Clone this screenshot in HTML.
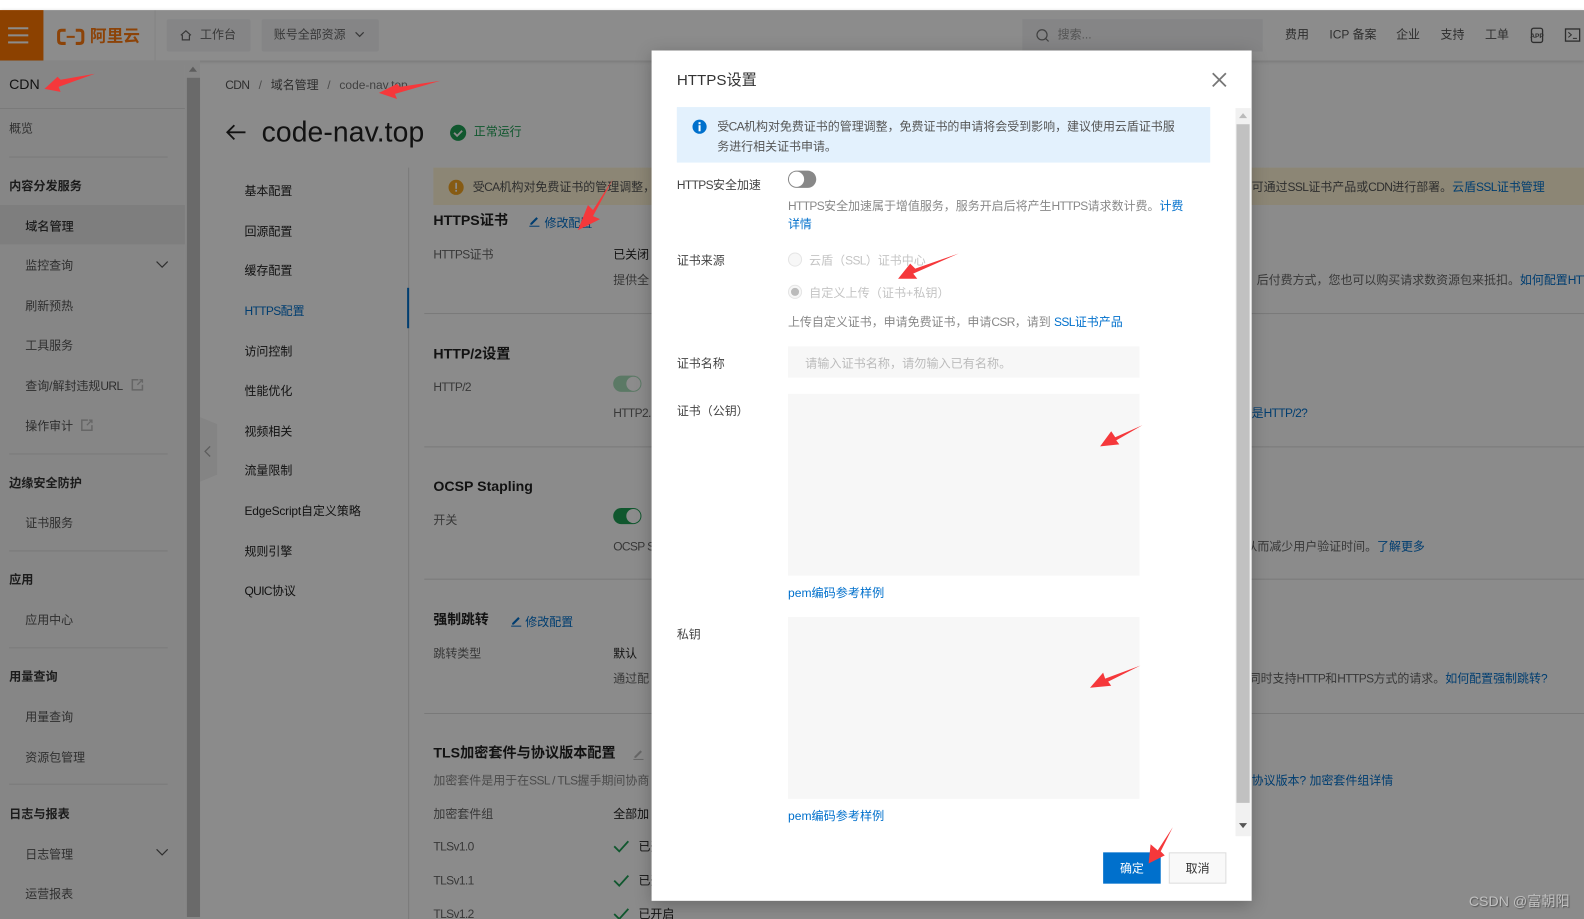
<!DOCTYPE html>
<html lang="zh"><head><meta charset="utf-8"><title>HTTPS设置</title>
<style>
html,body{margin:0;padding:0;width:1584px;height:919px;overflow:hidden;background:#fff}
#w{position:absolute;left:0;top:0;width:1568px;height:910px;overflow:hidden;transform:scale(1.0102,1.0099);transform-origin:0 0;font:11.85px/18px "Liberation Sans","Noto Sans CJK SC",sans-serif;color:#333;background:#fff}
.t{position:absolute;white-space:nowrap;line-height:18px;margin-top:.5px}
.b{position:absolute}
.g{color:#666}.l{color:#555}.k{color:#222}.a{color:#0070cc}
.n{letter-spacing:-.6px}
.h{font-weight:700;font-size:14px;color:#222}
.s{font-weight:700;font-size:12px;color:#333}
.d{position:absolute;height:1px;background:#ddd}
.m0{margin-top:0}
svg{position:absolute;overflow:visible}
</style></head><body><div id="w">
<!-- page -->
<div class="b" style="left:0;top:10px;width:1568px;height:900px;background:#fdfdfd"></div>
<div class="b" style="left:0;top:10px;width:1568px;height:50px;background:#fff;box-shadow:0 1px 4px rgba(0,0,0,.2)"></div>
<div class="b" style="left:0;top:10px;width:43px;height:50px;background:#ff7700"></div>
<div class="b" style="left:8px;top:27px;width:20px;height:2px;background:#fff"></div>
<div class="b" style="left:8px;top:34px;width:20px;height:2px;background:#fff"></div>
<div class="b" style="left:8px;top:41px;width:20px;height:2px;background:#fff"></div>
<svg style="left:0;top:0" width="200" height="60"><g fill="none" stroke="#ff7a10" stroke-width="3"><path d="M65 30h-4q-3 0-3 3v7q0 3 3 3h4"/><path d="M75 30h4q3 0 3 3v7q0 3-3 3h-4"/><path d="M66 36.500h8" stroke-width="2"/></g></svg>
<div class="t m0" style="left:89px;top:26px;font-size:16.500px;line-height:20px;font-weight:700;color:#ff7a10">阿里云</div>
<div class="b" style="left:153px;top:10px;width:1px;height:50px;background:#eee"></div>
<div class="b" style="left:165px;top:19px;width:83px;height:32px;background:#f2f3f5;border-radius:2px"></div>
<svg style="left:178px;top:29px" width="12" height="12" viewBox="0 0 12 12"><path d="M1 6l5-4.500 5 4.500M2.500 5.500v5h7v-5" fill="none" stroke="#666" stroke-width="1.200"/></svg>
<div class="t g m0" style="left:198px;top:25px">工作台</div>
<div class="b" style="left:259px;top:19px;width:116px;height:32px;background:#f2f3f5;border-radius:2px"></div>
<div class="t g m0" style="left:271px;top:25px">账号全部资源</div>
<svg style="left:351px;top:31px" width="10" height="8"><path d="M1 1l4 4 4-4" fill="none" stroke="#666" stroke-width="1.200"/></svg>
<div class="b" style="left:1012px;top:19px;width:238px;height:32px;background:#f2f3f5"></div>
<svg style="left:1025px;top:28px" width="14" height="14"><circle cx="6.500" cy="6.500" r="5" fill="none" stroke="#777" stroke-width="1.200"/><path d="M10 10l3 3" stroke="#777" stroke-width="1.200"/></svg>
<div class="t m0" style="left:1047px;top:25px;color:#999">搜索...</div>
<div class="t l m0" style="left:1272px;top:25px">费用</div>
<div class="t l m0" style="left:1316px;top:25px">ICP 备案</div>
<div class="t l m0" style="left:1382px;top:25px">企业</div>
<div class="t l m0" style="left:1426px;top:25px">支持</div>
<div class="t l m0" style="left:1470px;top:25px">工单</div>
<svg style="left:1514px;top:27px" width="16" height="16"><rect x="2" y="1" width="11" height="14" rx="2" fill="none" stroke="#555" stroke-width="1.300"/><text x="7.500" y="10.500" font-size="6.500" font-weight="700" text-anchor="middle" fill="#555" font-family="Liberation Sans">APP</text></svg>
<svg style="left:1549px;top:28px" width="16" height="14"><rect x=".700" y=".700" width="14" height="12" fill="none" stroke="#555" stroke-width="1.300"/><path d="M3.500 4l3 2.500-3 2.500M8 10h4" fill="none" stroke="#555"/></svg>

<!-- sidebar -->
<div class="b" style="left:0;top:60px;width:183px;height:850px;background:#f5f5f5"></div>
<div class="b" style="left:183px;top:60px;width:15px;height:850px;background:#f5f5f5"></div>
<div class="b" style="left:185px;top:77px;width:13px;height:831px;background:#c1c1c1"></div>
<svg style="left:186px;top:66px" width="10" height="6"><path d="M5 0l4 5H1z" fill="#aaa"/></svg>
<div class="t m0" style="left:9px;top:74px;font-size:14px;color:#222">CDN</div>
<div class="d" style="left:0;top:107px;width:183px"></div>
<div class="t l m0" style="left:9px;top:118px">概览</div>
<div class="d" style="left:9px;top:155px;width:157px"></div>
<div class="t s" style="left:9px;top:174px">内容分发服务</div>
<div class="b" style="left:0;top:203px;width:183px;height:39px;background:#e6e6e6"></div>
<div class="t s" style="left:25px;top:214px;font-weight:500">域名管理</div>
<div class="t l" style="left:25px;top:253px">监控查询</div>
<svg style="left:154px;top:258px" width="13" height="9"><path d="M1 1l5.500 5.500L12 1" fill="none" stroke="#555" stroke-width="1.200"/></svg>
<div class="t l" style="left:25px;top:293px">刷新预热</div>
<div class="t l" style="left:25px;top:332px">工具服务</div>
<div class="t l" style="left:25px;top:372px">查询/解封违规<span class="n">URL</span></div>
<svg style="left:130px;top:375px" width="12" height="12"><path d="M7 1H1v10h10V6" fill="none" stroke="#bbb" stroke-width="1.500"/><path d="M6 6l5-5M8 1h3v3" fill="none" stroke="#bbb" stroke-width="1.300"/></svg>
<div class="t l" style="left:25px;top:412px">操作审计</div>
<svg style="left:80px;top:415px" width="12" height="12"><path d="M7 1H1v10h10V6" fill="none" stroke="#bbb" stroke-width="1.500"/><path d="M6 6l5-5M8 1h3v3" fill="none" stroke="#bbb" stroke-width="1.300"/></svg>
<div class="d" style="left:9px;top:449px;width:157px"></div>
<div class="t s" style="left:9px;top:468px">边缘安全防护</div>
<div class="t l" style="left:25px;top:508px">证书服务</div>
<div class="d" style="left:9px;top:545px;width:157px"></div>
<div class="t s" style="left:9px;top:564px">应用</div>
<div class="t l" style="left:25px;top:604px">应用中心</div>
<div class="d" style="left:9px;top:641px;width:157px"></div>
<div class="t s" style="left:9px;top:660px">用量查询</div>
<div class="t l" style="left:25px;top:700px">用量查询</div>
<div class="t l" style="left:25px;top:740px">资源包管理</div>
<div class="d" style="left:9px;top:776px;width:157px"></div>
<div class="t s" style="left:9px;top:796px">日志与报表</div>
<div class="t l" style="left:25px;top:836px">日志管理</div>
<svg style="left:154px;top:840px" width="13" height="9"><path d="M1 1l5.500 5.500L12 1" fill="none" stroke="#555" stroke-width="1.200"/></svg>
<div class="t l" style="left:25px;top:875px">运营报表</div>
<svg style="left:198px;top:413px" width="18" height="65"><path d="M0 0l17 7v50L0 64z" fill="#f0f0f0"/><path d="M10 27l-5 5 5 5" fill="none" stroke="#aaa" stroke-width="1.300" transform="translate(0,2)"/></svg>

<!-- head -->
<div class="t l m0" style="left:223px;top:75px"><span class="n">CDN</span></div>
<div class="t m0" style="left:256px;top:75px;color:#888">/</div>
<div class="t l m0" style="left:268px;top:75px">域名管理</div>
<div class="t m0" style="left:324px;top:75px;color:#888">/</div>
<div class="t m0" style="left:336px;top:75px;color:#777">code-nav.top</div>
<svg style="left:223px;top:122px" width="21" height="18"><path d="M20 9H2M9 2L2 9l7 7" fill="none" stroke="#222" stroke-width="1.800"/></svg>
<div class="t m0" style="left:259px;top:114px;font-size:28px;line-height:34px;letter-spacing:.1px;color:#222">code-nav.top</div>
<svg style="left:445px;top:123px" width="17" height="17"><circle cx="8.500" cy="8.500" r="8" fill="#1e9e55"/><path d="M4.500 8.500l3 3 5-5" fill="none" stroke="#fff" stroke-width="1.800"/></svg>
<div class="t m0" style="left:469px;top:121px;color:#1e9e55">正常运行</div>

<!-- sub menu -->
<div class="t k" style="left:242px;top:179px">基本配置</div>
<div class="t k" style="left:242px;top:219px">回源配置</div>
<div class="t k" style="left:242px;top:258px">缓存配置</div>
<div class="t a" style="left:242px;top:298px"><span class="n">HTTPS</span>配置</div>
<div class="t k" style="left:242px;top:338px">访问控制</div>
<div class="t k" style="left:242px;top:377px">性能优化</div>
<div class="t k" style="left:242px;top:417px">视频相关</div>
<div class="t k" style="left:242px;top:456px">流量限制</div>
<div class="t k" style="left:242px;top:496px"><span style="letter-spacing:-.2px">EdgeScript</span>自定义策略</div>
<div class="t k" style="left:242px;top:536px">规则引擎</div>
<div class="t k" style="left:242px;top:575px"><span class="n">QUIC</span>协议</div>
<div class="b" style="left:404px;top:166px;width:1px;height:744px;background:#ddd"></div>
<div class="b" style="left:403px;top:285px;width:2px;height:40px;background:#0070cc"></div>

<!-- main -->
<div class="b" style="left:429px;top:166px;width:1139px;height:37px;background:#fff5d6"></div>
<svg style="left:444px;top:178px" width="15" height="15"><circle cx="7.500" cy="7.500" r="7.500" fill="#f5a623"/><rect x="6.700" y="3" width="1.700" height="6" fill="#fff"/><rect x="6.700" y="10" width="1.700" height="1.800" fill="#fff"/></svg>
<div class="t l" style="left:468px;top:175px"><span class="n">受CA</span>机构对免费证书的管理调整，</div>
<div class="t l" style="left:1239px;top:175px">可通过<span class="n">SSL</span>证书产品或<span class="n">CDN</span>进行部署。<span class="a">云盾<span class="n">SSL</span>证书管理</span></div>

<div class="t h" style="left:429px;top:208px">HTTPS证书</div>
<svg class="pen" style="left:523px;top:213px" width="12" height="12"><path d="M1 11h10M2 8l6-6 1.500 1.500-6 6H2z" fill="#0070cc"/><path d="M1 11h10" stroke="#0070cc"/></svg>
<div class="t a" style="left:539px;top:211px">修改配置</div>
<div class="t g" style="left:429px;top:242px"><span class="n">HTTPS</span>证书</div>
<div class="t k" style="left:607px;top:242px">已关闭</div>
<div class="t g" style="left:607px;top:267px">提供全</div>
<div class="t g" style="left:1244px;top:267px">后付费方式，您也可以购买请求数资源包来抵扣。<span class="a">如何配置<span class="n">HTTPS</span></span></div>
<div class="d" style="left:420px;top:310px;width:1148px"></div>

<div class="t h" style="left:429px;top:340px">HTTP/2设置</div>
<div class="t g" style="left:429px;top:373px"><span class="n">HTTP/2</span></div>
<div class="b" style="left:607px;top:372px;width:28px;height:16px;border-radius:8px;background:#a6dcb8"></div>
<div class="b" style="left:620px;top:373px;width:14px;height:14px;border-radius:50%;background:#fff"></div>
<div class="t g" style="left:607px;top:399px"><span class="n">HTTP2.</span></div>
<div class="t a" style="left:1239px;top:399px">是<span class="n">HTTP/2?</span></div>
<div class="d" style="left:420px;top:442px;width:1148px"></div>

<div class="t h" style="left:429px;top:471px">OCSP Stapling</div>
<div class="t g" style="left:429px;top:505px">开关</div>
<div class="b" style="left:607px;top:503px;width:28px;height:16px;border-radius:8px;background:#1e9e55"></div>
<div class="b" style="left:620px;top:504px;width:14px;height:14px;border-radius:50%;background:#fff"></div>
<div class="t g" style="left:607px;top:531px"><span class="n">OCSP S</span></div>
<div class="t g" style="left:1221px;top:531px">，从而减少用户验证时间。<span class="a">了解更多</span></div>
<div class="d" style="left:420px;top:573px;width:1148px"></div>

<div class="t h" style="left:429px;top:604px;font-size:13.700px">强制跳转</div>
<svg style="left:505px;top:609px" width="12" height="12"><path d="M2 8l6-6 1.500 1.500-6 6H2z" fill="#0070cc"/><path d="M1 11h10" stroke="#0070cc"/></svg>
<div class="t a" style="left:520px;top:606px">修改配置</div>
<div class="t g" style="left:429px;top:637px">跳转类型</div>
<div class="t k" style="left:607px;top:637px">默认</div>
<div class="t g" style="left:607px;top:662px">通过配</div>
<div class="t g" style="left:1236px;top:662px">同时支持<span class="n">HTTP</span>和<span class="n">HTTPS</span>方式的请求。<span class="a">如何配置强制跳转?</span></div>
<div class="d" style="left:420px;top:706px;width:1148px"></div>

<div class="t h" style="left:429px;top:735px">TLS加密套件与协议版本配置</div>
<svg style="left:626px;top:741px" width="12" height="12"><path d="M2 8l6-6 1.500 1.500-6 6H2z" fill="#bbb"/><path d="M1 11h10" stroke="#bbb"/></svg>
<div class="t" style="left:429px;top:763px;color:#888">加密套件是用于在<span class="n">SSL / TLS</span>握手期间协商</div>
<div class="t a" style="left:1239px;top:763px">协议版本? 加密套件组详情</div>
<div class="t g" style="left:429px;top:796px">加密套件组</div>
<div class="t k" style="left:607px;top:796px">全部加</div>
<div class="t g" style="left:429px;top:828px"><span class="n">TLSv1.0</span></div>
<div class="t g" style="left:429px;top:862px"><span class="n">TLSv1.1</span></div>
<div class="t g" style="left:429px;top:895px"><span class="n">TLSv1.2</span></div>
<svg style="left:607px;top:831px" width="16" height="14"><path d="M1 7l5 5 9-10" fill="none" stroke="#1e9e55" stroke-width="1.800"/></svg>
<svg style="left:607px;top:865px" width="16" height="14"><path d="M1 7l5 5 9-10" fill="none" stroke="#1e9e55" stroke-width="1.800"/></svg>
<svg style="left:607px;top:898px" width="16" height="14"><path d="M1 7l5 5 9-10" fill="none" stroke="#1e9e55" stroke-width="1.800"/></svg>
<div class="t k" style="left:632px;top:828px">已开启</div>
<div class="t k" style="left:632px;top:862px">已开启</div>
<div class="t k" style="left:632px;top:895px">已开启</div>

<!-- overlay -->
<div class="b" style="left:0;top:10px;width:1568px;height:900px;background:rgba(0,0,0,.45)"></div>

<!-- modal -->
<div class="b" style="left:645px;top:50px;width:594px;height:842px;background:#fff;box-shadow:0 4px 16px rgba(0,0,0,.25)"></div>
<div class="t" style="left:670px;top:69px;font-size:15px;line-height:20px;color:#333">HTTPS设置</div>
<svg style="left:1199px;top:71px" width="16" height="16"><path d="M1.500 1.500l13 13M14.500 1.500l-13 13" stroke="#777" stroke-width="1.800" fill="none"/></svg>
<div class="b" style="left:670px;top:106px;width:528px;height:55px;background:#e3f1fd"></div>
<svg style="left:685px;top:118px" width="15" height="15"><circle cx="7.500" cy="7.500" r="7" fill="#0070cc"/><rect x="6.500" y="6" width="2" height="6" fill="#fff"/><rect x="6.500" y="3" width="2" height="2" fill="#fff"/></svg>
<div class="t l" style="left:710px;top:115px"><span class="n">受CA</span>机构对免费证书的管理调整，免费证书的申请将会受到影响，建议使用云盾证书服</div>
<div class="t l" style="left:710px;top:135px">务进行相关证书申请。</div>
<div class="b" style="left:1223px;top:107px;width:15px;height:721px;background:#f1f1f1"></div>
<div class="b" style="left:1224px;top:123px;width:13px;height:672px;background:#c1c1c1"></div>
<svg style="left:1226px;top:112px" width="9" height="6"><path d="M4.500 0L8.500 5H.5z" fill="#bbb"/></svg>
<svg style="left:1226px;top:815px" width="9" height="6"><path d="M4.500 5L8.500 0H.5z" fill="#555"/></svg>

<div class="t" style="left:670px;top:173px;color:#444"><span class="n">HTTPS</span>安全加速</div>
<div class="b" style="left:780px;top:169px;width:28px;height:17px;border-radius:9px;background:#888"></div>
<div class="b" style="left:781px;top:170px;width:15px;height:15px;border-radius:50%;background:#fff"></div>
<div class="t" style="left:780px;top:194px;color:#888"><span class="n">HTTPS</span>安全加速属于增值服务，服务开启后将产生<span class="n">HTTPS</span>请求数计费。<span class="a">计费</span></div>
<div class="t a" style="left:780px;top:212px">详情</div>

<div class="t" style="left:670px;top:248px;color:#444">证书来源</div>
<div class="b" style="left:780px;top:250px;width:12px;height:12px;border:1px solid #e5e5e5;border-radius:50%;background:#f7f7f7"></div>
<div class="t" style="left:801px;top:248px;color:#c4c4c4">云盾（<span class="n">SSL</span>）证书中心</div>
<div class="b" style="left:780px;top:282px;width:12px;height:12px;border:1px solid #e5e5e5;border-radius:50%;background:#f7f7f7"></div>
<div class="b" style="left:783px;top:285px;width:8px;height:8px;border-radius:50%;background:#bbb"></div>
<div class="t" style="left:801px;top:280px;color:#c4c4c4;font-size:12px">自定义上传（证书+私钥）</div>
<div class="t" style="left:780px;top:309px;color:#888">上传自定义证书，申请免费证书，申请<span class="n">CSR</span>，请到 <span class="a"><span class="n">SSL</span>证书产品</span></div>

<div class="t" style="left:670px;top:350px;color:#444">证书名称</div>
<div class="b" style="left:780px;top:343px;width:348px;height:31px;background:#f7f7f7"></div>
<div class="t" style="left:797px;top:350px;color:#bbb;font-size:12px">请输入证书名称，请勿输入已有名称。</div>

<div class="t" style="left:670px;top:397px;color:#444">证书（公钥）</div>
<div class="b" style="left:780px;top:390px;width:348px;height:180px;background:#f7f7f7"></div>
<div class="t a" style="left:780px;top:577px;font-size:12px">pem编码参考样例</div>

<div class="t" style="left:670px;top:618px;color:#444">私钥</div>
<div class="b" style="left:780px;top:611px;width:348px;height:180px;background:#f7f7f7"></div>
<div class="t a" style="left:780px;top:798px;font-size:12px">pem编码参考样例</div>

<div class="t m0" style="left:1092px;top:844px;width:57px;height:31px;line-height:32px;text-align:center;background:#0070cc;color:#fff">确定</div>
<div class="t m0" style="left:1157px;top:844px;width:55px;height:29px;line-height:30px;text-align:center;background:#f9f9f9;border:1px solid #ddd;color:#333">取消</div>

<!-- annotations -->
<svg style="left:0;top:0" width="1568" height="910"><g fill="#f5383b">
<path d="M94 73L60 79 57 76 44 88 60 91 58 86z"/>
<path d="M436 80L396 86 393 83 375 92 393 98 391 93z"/>
<path d="M607 177L587 208 582 203 572 228 594 217 587 214z"/>
<path d="M949 251L906 266 901 261 889 276 908 276 904 271z"/>
<path d="M1131 421L1104 433 1100 427 1089 442 1108 440 1105 436z"/>
<path d="M1129 659L1094 672 1092 666 1079 681 1100 679 1097 675z"/>
<path d="M1161 819L1146 842 1139 836 1137 855 1153 847 1149 843z"/>
</g></svg>
<div class="t m0" style="left:1454px;top:883px;font-size:14px;color:#c0c0c0;text-shadow:1px 1px 1px #555">CSDN @富朝阳</div>
</div></body></html>
